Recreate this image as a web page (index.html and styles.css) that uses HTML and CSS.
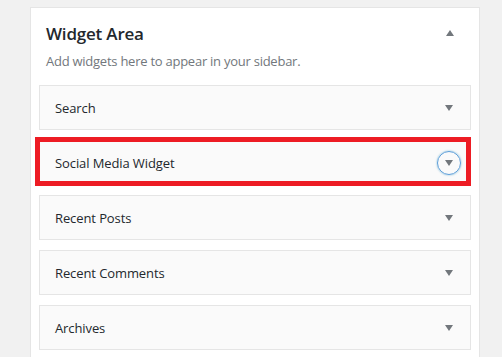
FILE: index.html
```html
<!DOCTYPE html>
<html lang="en">
<head>
  <meta charset="UTF-8" />
  <meta name="viewport" content="width=device-width, initial-scale=1.0"/>
  <title>Widget Area</title>
  <link rel="stylesheet" href="styles.css">
</head>
<body>
  <div class="sidebar">
    <div class="sidebar-head">
      <h2>Widget Area</h2>
      <span class="toggle"><span class="arrow up"></span></span>
    </div>
    <p class="desc">Add widgets here to appear in your sidebar.</p>

    <div class="widgets">
      <div class="widget">
        <span class="widget-title">Search</span>
        <span class="toggle"><span class="arrow"></span></span>
      </div>
      <div class="widget highlight">
        <span class="widget-title">Social Media Widget</span>
        <span class="toggle focus"><span class="arrow"></span></span>
      </div>
      <div class="widget">
        <span class="widget-title">Recent Posts</span>
        <span class="toggle"><span class="arrow"></span></span>
      </div>
      <div class="widget">
        <span class="widget-title">Recent Comments</span>
        <span class="toggle"><span class="arrow"></span></span>
      </div>
      <div class="widget">
        <span class="widget-title">Archives</span>
        <span class="toggle"><span class="arrow"></span></span>
      </div>
    </div>
  </div>
</body>
</html>
```

FILE: styles.css
```css
body {
  font-family: "Open Sans", "Noto Sans", sans-serif;
  background: #f1f1f1;
  margin: 0;
  padding: 7px 0 0 30px;
  color: #23282d;
}
.sidebar {
  width: 432px;
  background: white;
  border: 1px solid #e5e5e5;
  padding: 14px 8px 20px 8px;
}
.sidebar-head {
  display: flex;
  justify-content: space-between;
  align-items: center;
  padding-left: 7px;
  padding-right: 9px;
}
h2 {
  margin: 0;
  font-size: 17px;
  font-weight: 600;
  line-height: 24px;
  letter-spacing: -0.2px;
}
.desc {
  margin: 5px 0 14px 7px;
  font-size: 13px;
  line-height: 20px;
  color: #72777c;
  letter-spacing: -0.25px;
}
.widgets {
  display: flex;
  flex-direction: column;
  gap: 10px;
}
.widget {
  position: relative;
  height: 43px;
  background: #fafafa;
  border: 1px solid #e5e5e5;
  display: flex;
  justify-content: space-between;
  align-items: center;
  padding: 0 9px 0 15px;
}
.widget-title {
  font-size: 13px;
  font-weight: 500;
  letter-spacing: -0.1px;
}
.highlight::after {
  content: "";
  position: absolute;
  top: -4px;
  left: -5px;
  right: -1px;
  bottom: -2px;
  border: 5px solid #ed1c24;
}
.toggle {
  width: 24px;
  height: 24px;
  box-sizing: border-box;
  display: flex;
  align-items: center;
  justify-content: center;
  border-radius: 50%;
}
.toggle.focus {
  border: 1px solid #5b9dd9;
  box-shadow: 0 0 2px rgba(30, 140, 190, 0.6);
}
.arrow {
  width: 0;
  height: 0;
  border-left: 4.5px solid transparent;
  border-right: 4.5px solid transparent;
  border-top: 6px solid #72777c;
  margin-top: 1px;
}
.arrow.up {
  border-top: none;
  border-bottom: 6px solid #72777c;
  margin-top: -3px;
}
```
